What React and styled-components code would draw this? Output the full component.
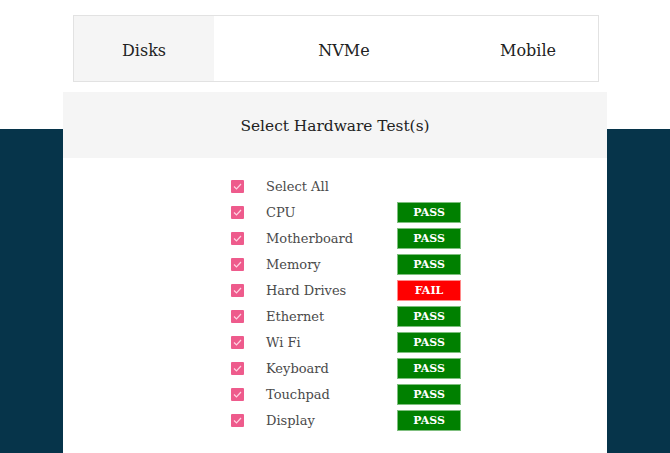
import React from "react";
import styled, { createGlobalStyle } from "styled-components";

const Global = createGlobalStyle`
  html, body { margin: 0; padding: 0; background: #ffffff; }
  body { font-family: "DejaVu Serif", "Liberation Serif", serif; color: #222; }
  #root { min-height: 453px; }
`;

const Page = styled.div`
  position: relative;
  width: 670px;
  height: 453px;
  overflow: hidden;
  background: linear-gradient(to bottom, #ffffff 0, #ffffff 129px, #06344a 129px, #06344a 100%);
  display: flex;
  flex-direction: column;
  align-items: center;
`;

const TabBar = styled.div`
  margin-top: 15px;
  margin-left: 2px;
  width: 524px;
  height: 65px;
  border: 1px solid #e2e2e2;
  background: #ffffff;
  display: grid;
  grid-template-columns: 140px 260px 108px;
`;

const Tab = styled.div`
  display: flex;
  align-items: center;
  justify-content: center;
  padding-top: 3px;
  font-size: 16px;
  color: #222;
  background: ${(p) => (p.$active ? "#f5f5f5" : "#ffffff")};
`;

const Card = styled.div`
  margin-top: 10px;
  width: 544px;
  flex: 1;
  background: #ffffff;
  display: flex;
  flex-direction: column;
`;

const CardHeader = styled.div`
  height: 66px;
  padding-top: 2px;
  box-sizing: border-box;
  background: #f5f5f5;
  display: flex;
  align-items: center;
  justify-content: center;
  font-size: 15.4px;
  color: #222;
`;

const List = styled.div`
  padding-top: 15px;
  padding-left: 168px;
  display: flex;
  flex-direction: column;
`;

const Row = styled.div`
  height: 26px;
  display: flex;
  align-items: center;
`;

const Check = styled.span`
  width: 13px;
  height: 13px;
  background: #ee5b8c;
  border-radius: 1px;
  display: flex;
  align-items: center;
  justify-content: center;
  flex: none;
`;

const Label = styled.span`
  margin-left: 22px;
  width: 131px;
  font-size: 13px;
  font-weight: 300;
  color: #4a4a4a;
  white-space: nowrap;
`;

const Badge = styled.span`
  width: 62px;
  height: 19px;
  border: 1px solid ${(p) => (p.$fail ? "#ff8a8a" : "#7fbf7f")};
  background: ${(p) => (p.$fail ? "#ff0000" : "#008000")};
  color: #ffffff;
  font-size: 11px;
  font-weight: bold;
  display: flex;
  align-items: center;
  justify-content: center;
`;

const CheckMark = () => (
  <svg width="9" height="7" viewBox="0 0 9 7">
    <path d="M1 3.5 L3.5 6 L8 1" fill="none" stroke="#ffd3e2" strokeWidth="1.2" />
  </svg>
);

const items = [
  ["CPU", "PASS"],
  ["Motherboard", "PASS"],
  ["Memory", "PASS"],
  ["Hard Drives", "FAIL"],
  ["Ethernet", "PASS"],
  ["Wi Fi", "PASS"],
  ["Keyboard", "PASS"],
  ["Touchpad", "PASS"],
  ["Display", "PASS"],
];

export default function App() {
  return (
    <>
      <Global />
      <Page>
        <TabBar>
          <Tab $active>Disks</Tab>
          <Tab>NVMe</Tab>
          <Tab>Mobile</Tab>
        </TabBar>
        <Card>
          <CardHeader>Select Hardware Test(s)</CardHeader>
          <List>
            <Row>
              <Check><CheckMark /></Check>
              <Label>Select All</Label>
            </Row>
            {items.map(([name, status]) => (
              <Row key={name}>
                <Check><CheckMark /></Check>
                <Label>{name}</Label>
                <Badge $fail={status === "FAIL"}>{status}</Badge>
              </Row>
            ))}
          </List>
        </Card>
      </Page>
    </>
  );
}
